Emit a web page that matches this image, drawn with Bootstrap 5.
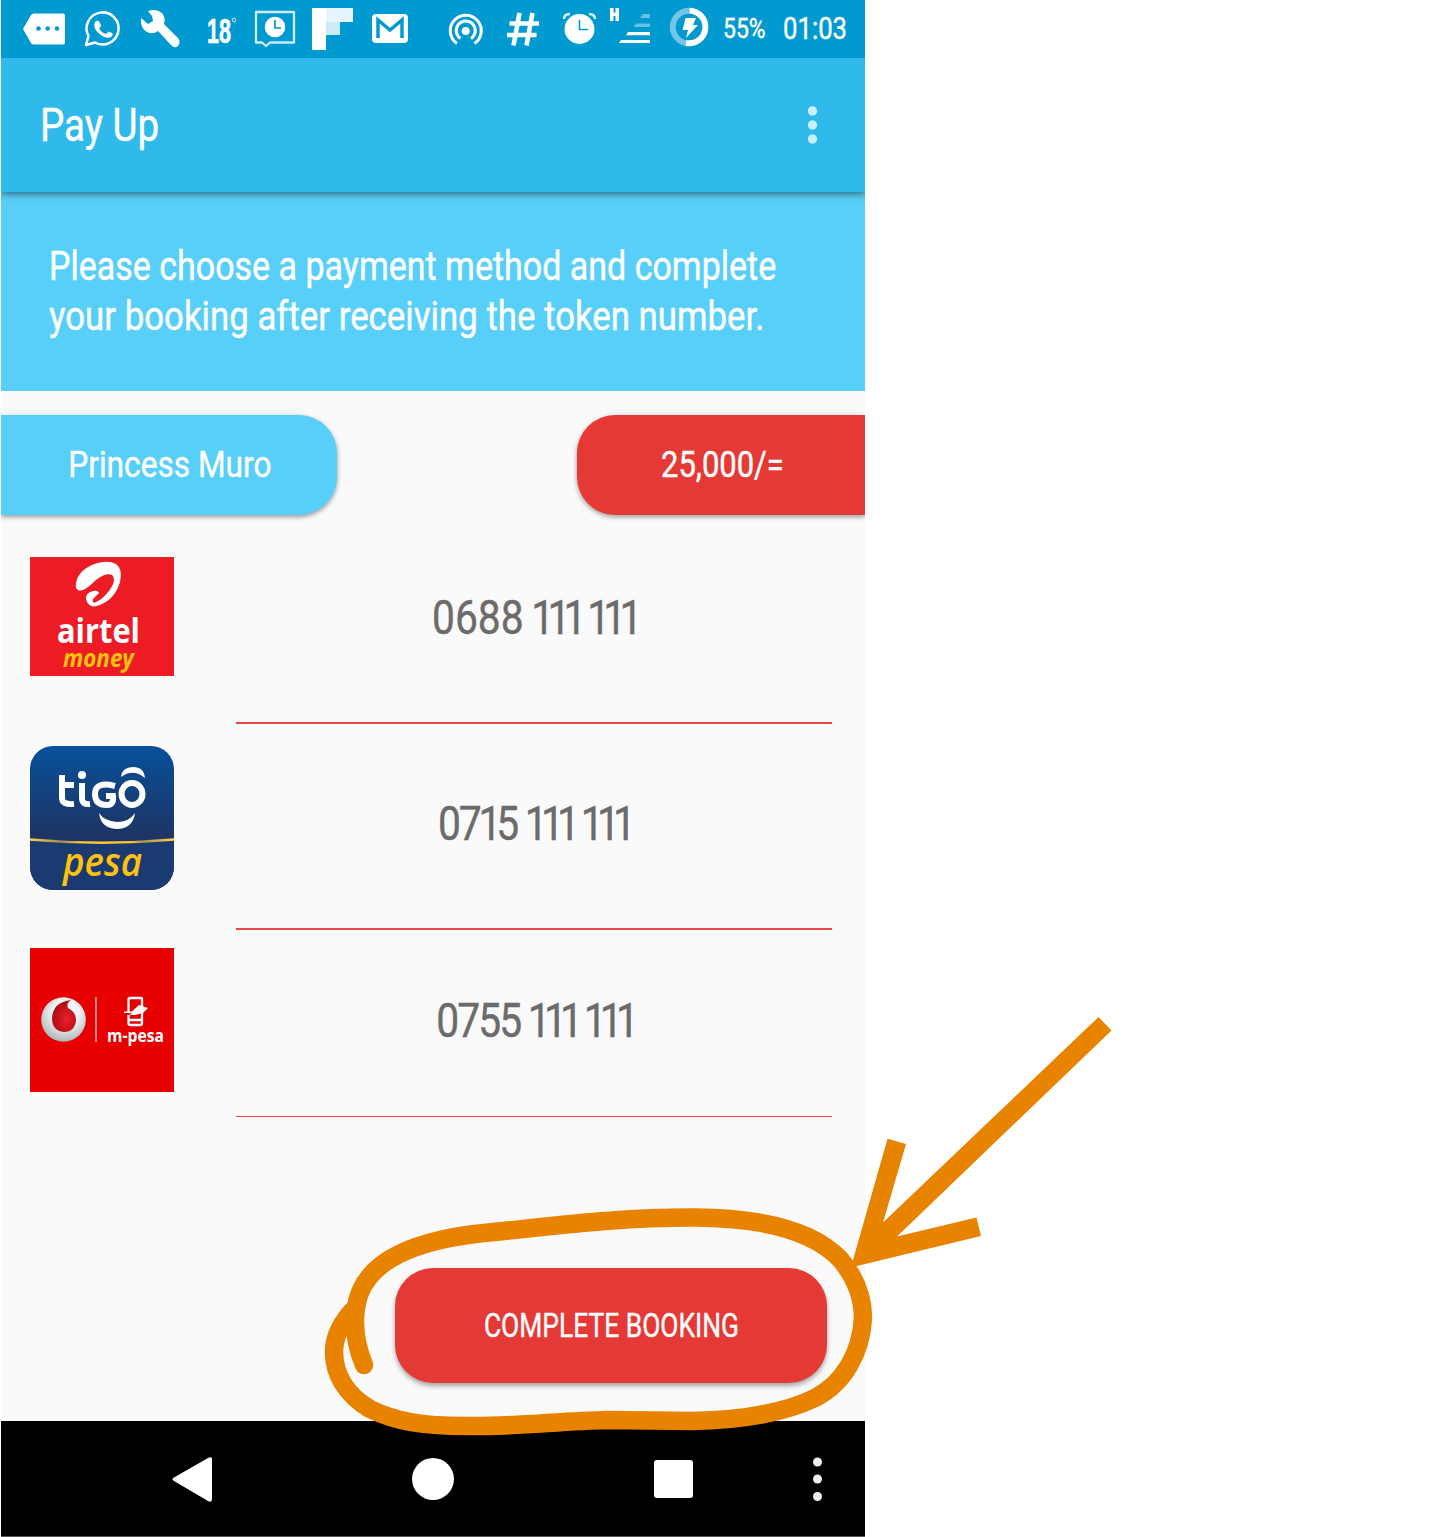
<!DOCTYPE html>
<html lang="en">
<head>
<meta charset="utf-8">
<meta name="viewport" content="width=device-width, initial-scale=1">
<title>Pay Up</title>
<link href="https://cdn.jsdelivr.net/npm/bootstrap@5.3.0/dist/css/bootstrap.min.css" rel="stylesheet">
<style>
body{background:#fff;font-family:Roboto,"Open Sans",sans-serif;overflow:hidden}
.phone{width:864px;height:1537px;margin-left:1px;background:#fafafa}
.status-bar{height:58px;background:#0099d0}
.app-bar{height:134px;background:#30baec;box-shadow:0 2px 7px rgba(0,0,0,.5);padding:0 43px 0 39px;z-index:1;clip-path:inset(0 0 -16px 0)}
.notice{height:199px;background:#58cff9;padding:50px 46px 0 48px;font-size:40px;line-height:50px}
.squeeze{display:inline-block;white-space:nowrap;transform-origin:0 50%;-webkit-text-stroke:.4px currentColor}
.mid{transform-origin:50% 50%}
.s-title{font-size:47px;line-height:60px;transform:scaleX(.82)}
.s-one{transform:scaleX(.85)}
.s-two{transform:scaleX(.87)}
.s-name{font-size:37px;transform:scaleX(.855)}
.s-price{font-size:36px;transform:scaleX(.86)}
.s-button{font-size:33px;transform:scaleX(.8)}
.s-batt{font-size:27px;width:60px;transform:scaleX(.85)}
.s-clock{font-size:31px;width:82px;margin-right:1px;transform:scaleX(.83)}
.chips{padding-top:24px;height:124px;overflow-x:clip}
.chip{height:100px;box-shadow:0 2px 5px rgba(0,0,0,.4)}
.chip-name{width:336px;background:#58cff9;border-radius:0 38px 38px 0;padding-left:2px}
.chip-price{width:288px;background:#e53935;border-radius:38px 0 0 38px;padding-left:2px}
.pay-row{padding-left:29px;padding-right:33px}
.pay-row-a{height:209px}.pay-row-b{height:206px}.pay-row-c{height:187px}
.pay-row-a .brand{margin-top:42px}.pay-row-b .brand{margin-top:22px}.pay-row-c .brand{margin-top:18px}
.field{width:596px;border-bottom:2px solid #e8453f;color:#6b6b6b;font-size:48px;line-height:60px}
.pay-row-a .field{padding-top:73px}.pay-row-b .field{padding-top:70px}.pay-row-c .field{padding-top:61px;border-bottom-width:1px}
.s-num{transform:scaleX(.85)}
.ones{letter-spacing:-8px;margin-left:5px}
.tight{letter-spacing:-2.3px}
.btn-book{width:432px;height:115px;background:#e53935;border-radius:38px;margin:151px 0 0 394px;box-shadow:0 3px 5px rgba(0,0,0,.35)}
.btn-book:hover{background:#e53935}
.nav-keys{height:116px;background:#000;border-bottom:1px solid #555}
.marks{left:0;top:0;z-index:5;pointer-events:none}
svg{display:block;flex:none}
</style>
<script src="https://cdn.jsdelivr.net/npm/bootstrap@5.3.0/dist/js/bootstrap.bundle.min.js"></script>
</head>
<body class="position-relative">
<main class="phone d-flex flex-column">
  <div class="status-bar d-flex align-items-center text-white">
    <svg width="430" height="58" viewBox="1 0 430 58" fill="#fff">
      <path d="M23 29L31 15Q32 13.500 34 13.500H63Q65 13.500 65 15.500V42.500Q65 44.500 63 44.500H34Q32 44.500 31 43Z"/>
      <g fill="#0099d0"><circle cx="38.500" cy="28.500" r="2.300"/><circle cx="47.700" cy="28.500" r="2.300"/><circle cx="57" cy="28.500" r="2.300"/></g>
      <path d="M86 45L88.500 36A16 16 0 1 1 95 42.500Z" fill="none" stroke="#fff" stroke-width="2.500" stroke-linejoin="round"/>
      <path d="M95 22Q98 19.500 99.500 22L101 25.500Q101 27 99 28.500Q102 33 106 34L108.500 31.500L112 33Q114 34.500 111 37Q107 39.500 100 34.500Q92 28 95 22Z"/>
      <path d="M141 18L148 24L153 21L152 16L148 11Q156 8 162 13Q166 18 164 24L178 38Q181 42 178 46Q175 49 171 45L158 31Q153 35 147 32Q140 28 141 18Z"/>
      <text x="207" y="43" font-family="Liberation Sans" font-weight="700" font-size="35" textLength="24" lengthAdjust="spacingAndGlyphs" stroke="#fff" stroke-width=".6">18</text>
      <circle cx="234" cy="20" r="1.800" fill="none" stroke="#bde6f5"/>
      <path d="M256 12H294V42.500H270L266 46L262 42.500H256Z" fill="none" stroke="#ccebf6" stroke-width="2.300" stroke-linejoin="round"/>
      <circle cx="275" cy="27" r="10.300"/><path d="M275 20V28H281" fill="none" stroke="#0099d0" stroke-width="1.700"/>
      <path d="M312 8H326V50H312Z"/><path fill="#e5f5fb" d="M326 8H353V22H326Z"/><path fill="#cdeaf5" d="M326 22H340V35H326Z"/>
      <rect x="372" y="14" width="36" height="29" rx="4"/><path d="M378 38V20L390 30L402 20V38" fill="none" stroke="#0099d0" stroke-width="3.500"/>
    </svg>
    <svg width="292" height="58" viewBox="431 0 292 58" fill="#fff">
      <g fill="none" stroke="#fff" stroke-width="3"><path d="M457 43.500A15.500 15.500 0 1 1 474.500 43.500"/><path d="M460.500 38.500A9.500 9.500 0 1 1 471 38.500"/></g><circle cx="465.700" cy="31" r="4"/>
      <path d="M519.500 13L513.500 45.500M532.500 13L526.500 45.500M509.500 23.500H539M507 35H536.500" stroke="#fff" stroke-width="4.600" fill="none"/>
      <circle cx="579.500" cy="29" r="15"/><path d="M579.500 20V29.500H588" fill="none" stroke="#0099d0" stroke-width="1.600"/>
      <path d="M564 19Q564 14 570 14M595 19Q595 14 589 14" fill="none" stroke="#d9f0f8" stroke-width="2.500"/>
      <path d="M610 8H613.500V12.500H615.500V8H619V21H615.500V16H613.500V21H610Z"/>
      <path d="M621 40H650V43H619Z"/><path d="M628 32H650V35.300H626Z"/><path fill="#67c1e2" d="M636 23.500H650V27H633.500ZM643 14H650V18H640Z"/>
      <g fill="none" stroke-width="6"><path d="M689.500 10.700A16.300 16.300 0 0 0 686 43" stroke="#73c7e4"/><path d="M689.500 10.700A16.300 16.300 0 1 1 686 43" stroke="#fff"/></g>
      <path d="M685.500 18H696L693 25H698L686 38L688 30H682.500Z"/>
    </svg>
    <span class="d-flex"><span class="squeeze s-batt">55%</span></span><span class="squeeze s-clock">01:03</span>
  </div>
  <header class="app-bar d-flex align-items-center justify-content-between text-white position-relative">
    <h1 class="squeeze s-title fw-normal m-0">Pay Up</h1>
    <svg width="18" height="44" viewBox="0 0 18 44" fill="#cceefa"><circle cx="8.500" cy="8" r="4.700"/><circle cx="8.500" cy="22" r="4.700"/><circle cx="8.500" cy="36" r="4.700"/></svg>
  </header>
  <p class="notice text-white m-0"><span class="squeeze s-one">Please choose a payment method and complete</span><br><span class="squeeze s-two">your booking after receiving the token number.</span></p>
  <section class="chips d-flex justify-content-between text-white">
    <div class="chip chip-name d-flex align-items-center justify-content-center"><span class="squeeze mid s-name">Princess Muro</span></div>
    <div class="chip chip-price d-flex align-items-center justify-content-center"><span class="squeeze mid s-price">25,000/=</span></div>
  </section>
  <div class="pay-row pay-row-a d-flex justify-content-between">
    <svg class="brand" width="144" height="119" viewBox="0 0 144 119">
      <path fill="#ed1c24" d="M0 0H144V119H0Z"/>
      <path fill="#fff" d="M46 27Q47 15 62 8Q77 2 86 7Q93 12 90 25Q85 42 70 48Q61 52 57 45Q54 38 60 35Q68 32 69 36L65 40Q61 43 64 46Q72 43 79 34Q87 23 82 18Q76 15 66 23Q53 36 48 33Q45 31 46 27Z"/>
      <text x="27" y="86" font-family="Open Sans" font-size="34" font-weight="700" fill="#fff" textLength="83" lengthAdjust="spacingAndGlyphs">airtel</text>
      <text x="33" y="110" font-family="Open Sans" font-size="25" font-weight="700" font-style="italic" fill="#ffc20e" textLength="71" lengthAdjust="spacingAndGlyphs">money</text>
    </svg>
    <div class="field text-center"><span class="squeeze mid s-num">0688<span class="ones"> 111</span><span class="ones"> 111</span></span></div>
  </div>
  <div class="pay-row pay-row-b d-flex justify-content-between">
    <svg class="brand" width="144" height="144" viewBox="0 0 144 144" font-family="Open Sans">
      <defs><linearGradient id="navy" x2="0" y2="1"><stop stop-color="#07519b"/><stop offset=".6" stop-color="#1d3566"/></linearGradient>
      <linearGradient id="gold"><stop stop-color="#ffd24a"/><stop offset=".22" stop-color="#9a8755"/><stop offset=".35" stop-color="#ffc832"/><stop offset=".7" stop-color="#ffc832"/><stop offset=".78" stop-color="#a89150"/><stop offset="1" stop-color="#ffd24a"/></linearGradient><clipPath id="tile"><rect width="144" height="144" rx="23"/></clipPath></defs>
      <g clip-path="url(#tile)"><path fill="url(#navy)" d="M0 0H144V144H0Z"/><path fill="#1b3a72" d="M0 94Q72 102 144 94V144H0Z"/><path d="M0 93.500Q72 100 144 93.500" fill="none" stroke="url(#gold)" stroke-width="2.500"/></g>
      <g fill="none" stroke="#fff" stroke-width="6"><path d="M32 29V52Q32 59 44 58M32 39H44M52 37V52Q52 59 60 58"/><path d="M85 40Q65 35 65 48Q65 59 77 59Q84 59 83 50H76"/><ellipse cx="102" cy="48" rx="10.500" ry="11"/></g>
      <circle cx="52" cy="29" r="4" fill="#fff"/>
      <path fill="#fff" d="M91 31Q92 21 103 21Q114 21 115 32Q103 22 91 31ZM69 67Q71 83 88 83Q103 82 105 67Q99 76 87 76Q74 75 69 67Z"/>
      <text x="33" y="130" font-size="40" font-weight="600" font-style="italic" fill="#ffc20e" textLength="79" lengthAdjust="spacingAndGlyphs">pesa</text>
    </svg>
    <div class="field text-center"><span class="squeeze mid s-num"><span class="tight">0<span style="letter-spacing:-4px">7</span><span style="letter-spacing:-6px">1</span>5</span><span class="ones"> 111</span><span class="ones"> 111</span></span></div>
  </div>
  <div class="pay-row pay-row-c d-flex justify-content-between">
    <svg class="brand" width="144" height="144" viewBox="0 0 144 144" font-family="Open Sans">
      <defs><radialGradient id="silver" cx=".55" cy=".35" r=".7"><stop offset=".4" stop-color="#f4f6f7"/><stop offset="1" stop-color="#a5adb2"/></radialGradient><radialGradient id="ruby" cx=".6" cy=".6"><stop stop-color="#ec2029"/><stop offset="1" stop-color="#b50f16"/></radialGradient></defs>
      <path fill="#e60000" d="M0 0H144V144H0Z"/>
      <circle cx="33.500" cy="71.500" r="22.300" fill="url(#silver)"/>
      <path fill="url(#ruby)" d="M41 52Q36 55 38 60Q46 64 46 72Q45 84 34 84Q22 83 22 70Q23 54 41 52Z"/>
      <path d="M66 49V94" stroke="#f79a9a" stroke-width="1.700"/>
      <path fill="none" stroke="#fff" stroke-width="2.300" d="M98.500 64V51.500Q98.500 50 100 50H110.500Q112 50 112 51.500V75Q112 77 110 77H100.500Q98.500 77 98.500 75V67M98.500 72H112"/>
      <path fill="#fff" d="M94 63.500H102L109 57L118 60L113 65L105 67H99L102 65H94Z"/>
      <text x="77" y="94" font-size="18" font-weight="700" fill="#fff" textLength="57" lengthAdjust="spacingAndGlyphs">m-pesa</text>
    </svg>
    <div class="field text-center"><span class="squeeze mid s-num"><span class="tight">0755</span><span class="ones"> 111</span><span class="ones"> 111</span></span></div>
  </div>
  <button type="button" class="btn btn-book border-0 p-0 text-white"><span class="squeeze mid s-button">COMPLETE BOOKING</span></button>
  <nav class="nav-keys mt-auto">
    <svg width="864" height="115" viewBox="1 1421 864 115" fill="#fff">
      <path d="M174 1477.500L208 1458Q212 1456 212 1459V1499Q212 1503 208 1501L174 1481Q171 1479 174 1477.500Z"/>
      <circle cx="433" cy="1479" r="21"/><rect x="654" y="1460" width="39" height="38" rx="3"/>
      <g fill="#eee"><circle cx="817.500" cy="1462" r="4.500"/><circle cx="817.500" cy="1479" r="4.500"/><circle cx="817.500" cy="1496.500" r="4.500"/></g>
    </svg>
  </nav>
</main>
<!-- hand-drawn highlight and arrow over the booking button -->
<svg class="marks position-absolute" width="1433" height="1537" viewBox="0 0 1433 1537">
  <path fill="none" stroke="#e88300" stroke-width="18.500" stroke-linecap="round" stroke-linejoin="round" d="M364 1365C357 1348 353 1328 356 1308C362 1260 417 1240 484 1233C555 1226 621 1217 695 1217.500C768 1218 815 1233 840 1259C856 1278 863 1298 863 1318C861 1353 844 1383 815 1398C782 1414 741 1420 692 1421L608 1420C560 1421 512 1427 466 1426C420 1426 395 1421 370 1409C346 1395 334 1374 334 1352C334 1334 344 1319 356 1307"/>
  <path fill="#e88300" d="M1098.500 1017L1111.500 1030.500L897 1236.500L976.500 1217.500L981 1236L859 1265.500L851 1267L887.500 1138.700L906 1144L883 1222.500Z"/>
</svg>
</body>
</html>
